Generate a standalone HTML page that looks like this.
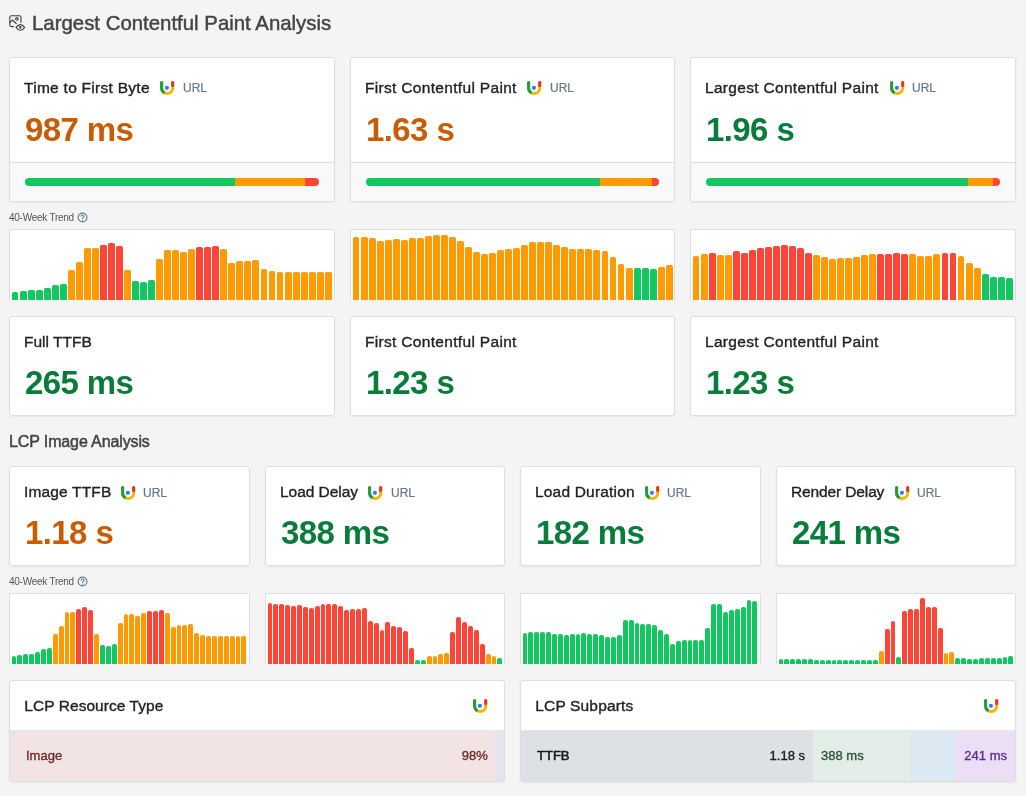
<!DOCTYPE html><html><head><meta charset="utf-8"><style>
*{box-sizing:border-box;margin:0;padding:0}
html,body{width:1026px;height:796px;overflow:hidden;background:#f4f4f4;font-family:"Liberation Sans",sans-serif}
body>div,body>svg{will-change:transform}
.h1{position:absolute;left:32px;top:10.5px;font-size:20.4px;color:#444;line-height:24px;white-space:nowrap;-webkit-text-stroke:0.45px currentColor}
.h2{position:absolute;left:8.5px;top:432px;font-size:16px;color:#444;line-height:20px;white-space:nowrap;letter-spacing:-0.12px;-webkit-text-stroke:0.5px currentColor}
.card{position:absolute;background:#fff;border:1px solid #dedede;border-radius:3px;overflow:hidden;box-shadow:0 1px 2px rgba(0,0,0,0.05)}
.mtitle{position:absolute;font-size:15.5px;line-height:20px;color:#222;white-space:nowrap;-webkit-text-stroke:0.35px #222}
.lg{position:absolute;width:15px;height:15px}
.lg svg{display:block}
.url{position:absolute;font-size:12px;line-height:15px;color:#687788;-webkit-text-stroke:0.2px #687788;white-space:nowrap}
.mval{position:absolute;font-size:33px;letter-spacing:-0.6px;font-weight:bold;line-height:36px;white-space:nowrap}
.foot{position:absolute;background:#f9f9f9;border-top:1px solid #dcdcdc;border-radius:0 0 3px 3px}
.dist{position:absolute;left:15px;right:15px;top:15px;height:8px;border-radius:4px;overflow:hidden;display:flex}
.trend{position:absolute;left:8.5px;font-size:10px;letter-spacing:-0.25px;color:#555;line-height:12px;white-space:nowrap}
.help{position:relative;display:inline-block;width:11px;height:11px;margin-left:2.8px;top:2.7px}
.help svg{left:0;top:-1px}
.chart{position:absolute;background:#fff;border:1px solid #dedede;border-bottom:none;border-radius:0 2px 0 0;overflow:hidden}
.chart svg{left:-1px!important;top:-1px!important}
.bt{position:absolute;left:14.3px;top:14.5px;font-size:15.5px;line-height:20px;color:#222;-webkit-text-stroke:0.35px #222;white-space:nowrap}
.lg2{position:absolute;right:16px;top:16.5px;width:15px;height:15px}
.lg2 svg{display:block}
.bbody{position:absolute;left:0;right:0;top:49px;bottom:0;font-size:13px;line-height:50px;border-top:1px solid #e4e6e6}
.bbody span{-webkit-text-stroke:0.35px currentColor}
.rt-l{position:absolute;left:16px;color:#6e2a2a}
.rt-r{position:absolute;right:16.3px;color:#6e2a2a}
.seg{position:absolute;top:0;bottom:0}
</style></head><body><svg width="20" height="20" viewBox="0 0 20 20" style="position:absolute;left:8px;top:14px" fill="none" stroke="#444" stroke-width="1.15" stroke-linecap="round" stroke-linejoin="round">
<path d="M5.5 12.55 H3.3 a1.5 1.5 0 0 1 -1.5 -1.5 V3.25 A1.5 1.5 0 0 1 3.3 1.75 H11.45 a1.5 1.5 0 0 1 1.5 1.5 V8.2"/>
<path d="M1.8 8.6 L4.4 6.05 L8.2 9.5"/>
<circle cx="8.9" cy="4.95" r="1.25"/>
<path d="M8.1 13.4 C9.7 10.8 10.8 10.55 12.35 10.55 C13.9 10.55 15 10.8 16.6 13.4 C15 16 13.9 16.25 12.35 16.25 C10.8 16.25 9.7 16 8.1 13.4Z"/>
<circle cx="12.3" cy="13.35" r="0.75" fill="#444"/>
</svg><div class="h1">Largest Contentful Paint Analysis</div><div class="card" style="left:9px;top:57px;width:326px;height:145px"></div><div class="mtitle" style="left:24.3px;top:78px;letter-spacing:0.276px">Time to First Byte</div><div class="lg" style="left:160px;top:79.5px"><svg class="logo" width="15" height="15" viewBox="0 0 15 15"><path d="M12.7 2.5 V7.9 A5.55 5.55 0 0 1 1.6 7.9 V2.5" fill="none" stroke="#fbb400" stroke-width="3" stroke-linecap="round"/><path d="M1.6 2.5 V7.9 A5.55 5.55 0 0 0 4.55 12.8" fill="none" stroke="#1f9d45" stroke-width="3"/><path d="M1.6 2.5 V4" fill="none" stroke="#1f9d45" stroke-width="3" stroke-linecap="round"/><path d="M12.7 2.5 V5.4" fill="none" stroke="#e5322b" stroke-width="3" stroke-linecap="round"/><circle cx="6.9" cy="7.8" r="2.1" fill="#3b7be8"/></svg></div><div class="url" style="left:182.7px;top:81px">URL</div><div class="mval" style="left:25px;top:112px;color:#c75d00">987 ms</div><div class="foot" style="left:10px;top:162px;width:324px;height:39px"><div class="dist"><div style="width:71.4%;background:#12c660"></div><div style="width:23.8%;background:#ff9a00"></div><div style="flex:1;background:#ff4538"></div></div></div><div class="card" style="left:350px;top:57px;width:325px;height:145px"></div><div class="mtitle" style="left:365.3px;top:78px;letter-spacing:0.319px">First Contentful Paint</div><div class="lg" style="left:526.5px;top:79.5px"><svg class="logo" width="15" height="15" viewBox="0 0 15 15"><path d="M12.7 2.5 V7.9 A5.55 5.55 0 0 1 1.6 7.9 V2.5" fill="none" stroke="#fbb400" stroke-width="3" stroke-linecap="round"/><path d="M1.6 2.5 V7.9 A5.55 5.55 0 0 0 4.55 12.8" fill="none" stroke="#1f9d45" stroke-width="3"/><path d="M1.6 2.5 V4" fill="none" stroke="#1f9d45" stroke-width="3" stroke-linecap="round"/><path d="M12.7 2.5 V5.4" fill="none" stroke="#e5322b" stroke-width="3" stroke-linecap="round"/><circle cx="6.9" cy="7.8" r="2.1" fill="#3b7be8"/></svg></div><div class="url" style="left:549.6px;top:81px">URL</div><div class="mval" style="left:366px;top:112px;color:#c75d00">1.63 s</div><div class="foot" style="left:351px;top:162px;width:323px;height:39px"><div class="dist"><div style="width:79.9%;background:#12c660"></div><div style="width:17.7%;background:#ff9a00"></div><div style="flex:1;background:#ff4538"></div></div></div><div class="card" style="left:690px;top:57px;width:326px;height:145px"></div><div class="mtitle" style="left:705.3px;top:78px;letter-spacing:0.309px">Largest Contentful Paint</div><div class="lg" style="left:889.5px;top:79.5px"><svg class="logo" width="15" height="15" viewBox="0 0 15 15"><path d="M12.7 2.5 V7.9 A5.55 5.55 0 0 1 1.6 7.9 V2.5" fill="none" stroke="#fbb400" stroke-width="3" stroke-linecap="round"/><path d="M1.6 2.5 V7.9 A5.55 5.55 0 0 0 4.55 12.8" fill="none" stroke="#1f9d45" stroke-width="3"/><path d="M1.6 2.5 V4" fill="none" stroke="#1f9d45" stroke-width="3" stroke-linecap="round"/><path d="M12.7 2.5 V5.4" fill="none" stroke="#e5322b" stroke-width="3" stroke-linecap="round"/><circle cx="6.9" cy="7.8" r="2.1" fill="#3b7be8"/></svg></div><div class="url" style="left:911.9px;top:81px">URL</div><div class="mval" style="left:706px;top:112px;color:#097b3b">1.96 s</div><div class="foot" style="left:691px;top:162px;width:324px;height:39px"><div class="dist"><div style="width:89.1%;background:#12c660"></div><div style="width:8.4%;background:#ff9a00"></div><div style="flex:1;background:#ff4538"></div></div></div><div class="trend" style="top:209.5px">40-Week Trend<span class="help"><svg width="11" height="11" viewBox="0 0 11 11" style="position:absolute"><circle cx="5.5" cy="5.5" r="4.4" fill="none" stroke="#6a7d90" stroke-width="1.2"/><path d="M4.1 4.4 A1.45 1.45 0 1 1 5.9 5.8 C5.5 6 5.5 6.3 5.5 6.8" fill="none" stroke="#6a7d90" stroke-width="1.1"/><circle cx="5.5" cy="8.2" r="0.6" fill="#6f8090"/></svg></span></div><div class="chart" style="left:9px;top:229px;width:326px;height:71px"><svg width="326" height="71" style="position:absolute;left:0;top:0"><path d="M3 72V64.80A1.8 1.8 0 0 1 4.80 63H7.20A1.8 1.8 0 0 1 9 64.80V72Z" fill="#12c660"/><path d="M11 72V63.80A1.8 1.8 0 0 1 12.80 62H16.20A1.8 1.8 0 0 1 18 63.80V72Z" fill="#12c660"/><path d="M19 72V62.80A1.8 1.8 0 0 1 20.80 61H24.20A1.8 1.8 0 0 1 26 62.80V72Z" fill="#12c660"/><path d="M27 72V62.80A1.8 1.8 0 0 1 28.80 61H32.20A1.8 1.8 0 0 1 34 62.80V72Z" fill="#12c660"/><path d="M35 72V60.80A1.8 1.8 0 0 1 36.80 59H40.20A1.8 1.8 0 0 1 42 60.80V72Z" fill="#12c660"/><path d="M43 72V57.80A1.8 1.8 0 0 1 44.80 56H48.20A1.8 1.8 0 0 1 50 57.80V72Z" fill="#12c660"/><path d="M51 72V56.80A1.8 1.8 0 0 1 52.80 55H56.20A1.8 1.8 0 0 1 58 56.80V72Z" fill="#12c660"/><path d="M59 72V42.80A1.8 1.8 0 0 1 60.80 41H64.20A1.8 1.8 0 0 1 66 42.80V72Z" fill="#ff9a00"/><path d="M67 72V34.80A1.8 1.8 0 0 1 68.80 33H72.20A1.8 1.8 0 0 1 74 34.80V72Z" fill="#ff9a00"/><path d="M75 72V20.80A1.8 1.8 0 0 1 76.80 19H80.20A1.8 1.8 0 0 1 82 20.80V72Z" fill="#ff9a00"/><path d="M83 72V20.80A1.8 1.8 0 0 1 84.80 19H88.20A1.8 1.8 0 0 1 90 20.80V72Z" fill="#ff9a00"/><path d="M91 72V17.80A1.8 1.8 0 0 1 92.80 16H96.20A1.8 1.8 0 0 1 98 17.80V72Z" fill="#ff4538"/><path d="M99 72V15.80A1.8 1.8 0 0 1 100.80 14H104.20A1.8 1.8 0 0 1 106 15.80V72Z" fill="#ff4538"/><path d="M107 72V18.80A1.8 1.8 0 0 1 108.80 17H112.20A1.8 1.8 0 0 1 114 18.80V72Z" fill="#ff4538"/><path d="M115 72V42.80A1.8 1.8 0 0 1 116.80 41H120.20A1.8 1.8 0 0 1 122 42.80V72Z" fill="#ff9a00"/><path d="M123 72V53.80A1.8 1.8 0 0 1 124.80 52H128.20A1.8 1.8 0 0 1 130 53.80V72Z" fill="#12c660"/><path d="M131 72V54.80A1.8 1.8 0 0 1 132.80 53H136.20A1.8 1.8 0 0 1 138 54.80V72Z" fill="#12c660"/><path d="M139 72V52.80A1.8 1.8 0 0 1 140.80 51H144.20A1.8 1.8 0 0 1 146 52.80V72Z" fill="#12c660"/><path d="M147 72V31.80A1.8 1.8 0 0 1 148.80 30H152.20A1.8 1.8 0 0 1 154 31.80V72Z" fill="#ff9a00"/><path d="M155 72V22.80A1.8 1.8 0 0 1 156.80 21H160.20A1.8 1.8 0 0 1 162 22.80V72Z" fill="#ff9a00"/><path d="M163 72V22.80A1.8 1.8 0 0 1 164.80 21H168.20A1.8 1.8 0 0 1 170 22.80V72Z" fill="#ff9a00"/><path d="M171 72V24.80A1.8 1.8 0 0 1 172.80 23H176.20A1.8 1.8 0 0 1 178 24.80V72Z" fill="#ff9a00"/><path d="M179 72V21.80A1.8 1.8 0 0 1 180.80 20H184.20A1.8 1.8 0 0 1 186 21.80V72Z" fill="#ff9a00"/><path d="M187 72V19.80A1.8 1.8 0 0 1 188.80 18H192.20A1.8 1.8 0 0 1 194 19.80V72Z" fill="#ff4538"/><path d="M195 72V19.80A1.8 1.8 0 0 1 196.80 18H200.20A1.8 1.8 0 0 1 202 19.80V72Z" fill="#ff4538"/><path d="M203 72V18.80A1.8 1.8 0 0 1 204.80 17H208.20A1.8 1.8 0 0 1 210 18.80V72Z" fill="#ff4538"/><path d="M211 72V21.80A1.8 1.8 0 0 1 212.80 20H216.20A1.8 1.8 0 0 1 218 21.80V72Z" fill="#ff9a00"/><path d="M219 72V35.80A1.8 1.8 0 0 1 220.80 34H224.20A1.8 1.8 0 0 1 226 35.80V72Z" fill="#ff9a00"/><path d="M227 72V33.80A1.8 1.8 0 0 1 228.80 32H232.20A1.8 1.8 0 0 1 234 33.80V72Z" fill="#ff9a00"/><path d="M235 72V33.80A1.8 1.8 0 0 1 236.80 32H240.20A1.8 1.8 0 0 1 242 33.80V72Z" fill="#ff9a00"/><path d="M243 72V32.80A1.8 1.8 0 0 1 244.80 31H248.20A1.8 1.8 0 0 1 250 32.80V72Z" fill="#ff9a00"/><path d="M252 72V41.80A1.8 1.8 0 0 1 253.80 40H256.20A1.8 1.8 0 0 1 258 41.80V72Z" fill="#ff9a00"/><path d="M260 72V43.80A1.8 1.8 0 0 1 261.80 42H264.20A1.8 1.8 0 0 1 266 43.80V72Z" fill="#ff9a00"/><path d="M268 72V44.80A1.8 1.8 0 0 1 269.80 43H272.20A1.8 1.8 0 0 1 274 44.80V72Z" fill="#ff9a00"/><path d="M276 72V44.80A1.8 1.8 0 0 1 277.80 43H281.20A1.8 1.8 0 0 1 283 44.80V72Z" fill="#ff9a00"/><path d="M284 72V44.80A1.8 1.8 0 0 1 285.80 43H289.20A1.8 1.8 0 0 1 291 44.80V72Z" fill="#ff9a00"/><path d="M292 72V44.80A1.8 1.8 0 0 1 293.80 43H297.20A1.8 1.8 0 0 1 299 44.80V72Z" fill="#ff9a00"/><path d="M300 72V44.80A1.8 1.8 0 0 1 301.80 43H305.20A1.8 1.8 0 0 1 307 44.80V72Z" fill="#ff9a00"/><path d="M308 72V44.80A1.8 1.8 0 0 1 309.80 43H313.20A1.8 1.8 0 0 1 315 44.80V72Z" fill="#ff9a00"/><path d="M316 72V44.80A1.8 1.8 0 0 1 317.80 43H321.20A1.8 1.8 0 0 1 323 44.80V72Z" fill="#ff9a00"/></svg></div><div class="chart" style="left:350px;top:229px;width:325px;height:71px"><svg width="325" height="71" style="position:absolute;left:0;top:0"><path d="M3 72V9.80A1.8 1.8 0 0 1 4.80 8H7.20A1.8 1.8 0 0 1 9 9.80V72Z" fill="#ff9a00"/><path d="M11 72V9.80A1.8 1.8 0 0 1 12.80 8H16.20A1.8 1.8 0 0 1 18 9.80V72Z" fill="#ff9a00"/><path d="M19 72V10.80A1.8 1.8 0 0 1 20.80 9H24.20A1.8 1.8 0 0 1 26 10.80V72Z" fill="#ff9a00"/><path d="M27 72V13.80A1.8 1.8 0 0 1 28.80 12H32.20A1.8 1.8 0 0 1 34 13.80V72Z" fill="#ff9a00"/><path d="M35 72V12.80A1.8 1.8 0 0 1 36.80 11H40.20A1.8 1.8 0 0 1 42 12.80V72Z" fill="#ff9a00"/><path d="M43 72V11.80A1.8 1.8 0 0 1 44.80 10H48.20A1.8 1.8 0 0 1 50 11.80V72Z" fill="#ff9a00"/><path d="M51 72V12.80A1.8 1.8 0 0 1 52.80 11H56.20A1.8 1.8 0 0 1 58 12.80V72Z" fill="#ff9a00"/><path d="M59 72V10.80A1.8 1.8 0 0 1 60.80 9H64.20A1.8 1.8 0 0 1 66 10.80V72Z" fill="#ff9a00"/><path d="M67 72V10.80A1.8 1.8 0 0 1 68.80 9H72.20A1.8 1.8 0 0 1 74 10.80V72Z" fill="#ff9a00"/><path d="M75 72V8.80A1.8 1.8 0 0 1 76.80 7H80.20A1.8 1.8 0 0 1 82 8.80V72Z" fill="#ff9a00"/><path d="M83 72V7.80A1.8 1.8 0 0 1 84.80 6H88.20A1.8 1.8 0 0 1 90 7.80V72Z" fill="#ff9a00"/><path d="M91 72V7.80A1.8 1.8 0 0 1 92.80 6H96.20A1.8 1.8 0 0 1 98 7.80V72Z" fill="#ff9a00"/><path d="M99 72V9.80A1.8 1.8 0 0 1 100.80 8H104.20A1.8 1.8 0 0 1 106 9.80V72Z" fill="#ff9a00"/><path d="M107 72V13.80A1.8 1.8 0 0 1 108.80 12H112.20A1.8 1.8 0 0 1 114 13.80V72Z" fill="#ff9a00"/><path d="M115 72V19.80A1.8 1.8 0 0 1 116.80 18H120.20A1.8 1.8 0 0 1 122 19.80V72Z" fill="#ff9a00"/><path d="M123 72V24.80A1.8 1.8 0 0 1 124.80 23H128.20A1.8 1.8 0 0 1 130 24.80V72Z" fill="#ff9a00"/><path d="M131 72V26.80A1.8 1.8 0 0 1 132.80 25H136.20A1.8 1.8 0 0 1 138 26.80V72Z" fill="#ff9a00"/><path d="M139 72V25.80A1.8 1.8 0 0 1 140.80 24H144.20A1.8 1.8 0 0 1 146 25.80V72Z" fill="#ff9a00"/><path d="M147 72V22.80A1.8 1.8 0 0 1 148.80 21H152.20A1.8 1.8 0 0 1 154 22.80V72Z" fill="#ff9a00"/><path d="M155 72V21.80A1.8 1.8 0 0 1 156.80 20H160.20A1.8 1.8 0 0 1 162 21.80V72Z" fill="#ff9a00"/><path d="M163 72V20.80A1.8 1.8 0 0 1 164.80 19H168.20A1.8 1.8 0 0 1 170 20.80V72Z" fill="#ff9a00"/><path d="M171 72V17.80A1.8 1.8 0 0 1 172.80 16H176.20A1.8 1.8 0 0 1 178 17.80V72Z" fill="#ff9a00"/><path d="M179 72V14.80A1.8 1.8 0 0 1 180.80 13H184.20A1.8 1.8 0 0 1 186 14.80V72Z" fill="#ff9a00"/><path d="M187 72V14.80A1.8 1.8 0 0 1 188.80 13H192.20A1.8 1.8 0 0 1 194 14.80V72Z" fill="#ff9a00"/><path d="M195 72V14.80A1.8 1.8 0 0 1 196.80 13H200.20A1.8 1.8 0 0 1 202 14.80V72Z" fill="#ff9a00"/><path d="M203 72V17.80A1.8 1.8 0 0 1 204.80 16H208.20A1.8 1.8 0 0 1 210 17.80V72Z" fill="#ff9a00"/><path d="M211 72V19.80A1.8 1.8 0 0 1 212.80 18H216.20A1.8 1.8 0 0 1 218 19.80V72Z" fill="#ff9a00"/><path d="M219 72V21.80A1.8 1.8 0 0 1 220.80 20H224.20A1.8 1.8 0 0 1 226 21.80V72Z" fill="#ff9a00"/><path d="M227 72V21.80A1.8 1.8 0 0 1 228.80 20H232.20A1.8 1.8 0 0 1 234 21.80V72Z" fill="#ff9a00"/><path d="M235 72V21.80A1.8 1.8 0 0 1 236.80 20H240.20A1.8 1.8 0 0 1 242 21.80V72Z" fill="#ff9a00"/><path d="M243 72V22.80A1.8 1.8 0 0 1 244.80 21H248.20A1.8 1.8 0 0 1 250 22.80V72Z" fill="#ff9a00"/><path d="M252 72V23.80A1.8 1.8 0 0 1 253.80 22H256.20A1.8 1.8 0 0 1 258 23.80V72Z" fill="#ff9a00"/><path d="M260 72V29.80A1.8 1.8 0 0 1 261.80 28H264.20A1.8 1.8 0 0 1 266 29.80V72Z" fill="#ff9a00"/><path d="M268 72V36.80A1.8 1.8 0 0 1 269.80 35H272.20A1.8 1.8 0 0 1 274 36.80V72Z" fill="#ff9a00"/><path d="M276 72V40.80A1.8 1.8 0 0 1 277.80 39H281.20A1.8 1.8 0 0 1 283 40.80V72Z" fill="#ff9a00"/><path d="M284 72V40.80A1.8 1.8 0 0 1 285.80 39H289.20A1.8 1.8 0 0 1 291 40.80V72Z" fill="#12c660"/><path d="M292 72V40.80A1.8 1.8 0 0 1 293.80 39H297.20A1.8 1.8 0 0 1 299 40.80V72Z" fill="#12c660"/><path d="M300 72V41.80A1.8 1.8 0 0 1 301.80 40H305.20A1.8 1.8 0 0 1 307 41.80V72Z" fill="#12c660"/><path d="M308 72V39.80A1.8 1.8 0 0 1 309.80 38H313.20A1.8 1.8 0 0 1 315 39.80V72Z" fill="#ff9a00"/><path d="M316 72V37.80A1.8 1.8 0 0 1 317.80 36H321.20A1.8 1.8 0 0 1 323 37.80V72Z" fill="#ff9a00"/></svg></div><div class="chart" style="left:690px;top:229px;width:326px;height:71px"><svg width="326" height="71" style="position:absolute;left:0;top:0"><path d="M3 72V28.80A1.8 1.8 0 0 1 4.80 27H7.20A1.8 1.8 0 0 1 9 28.80V72Z" fill="#ff9a00"/><path d="M11 72V26.80A1.8 1.8 0 0 1 12.80 25H16.20A1.8 1.8 0 0 1 18 26.80V72Z" fill="#ff9a00"/><path d="M19 72V25.80A1.8 1.8 0 0 1 20.80 24H24.20A1.8 1.8 0 0 1 26 25.80V72Z" fill="#ff4538"/><path d="M27 72V27.80A1.8 1.8 0 0 1 28.80 26H32.20A1.8 1.8 0 0 1 34 27.80V72Z" fill="#ff9a00"/><path d="M35 72V27.80A1.8 1.8 0 0 1 36.80 26H40.20A1.8 1.8 0 0 1 42 27.80V72Z" fill="#ff9a00"/><path d="M43 72V23.80A1.8 1.8 0 0 1 44.80 22H48.20A1.8 1.8 0 0 1 50 23.80V72Z" fill="#ff4538"/><path d="M51 72V25.80A1.8 1.8 0 0 1 52.80 24H56.20A1.8 1.8 0 0 1 58 25.80V72Z" fill="#ff4538"/><path d="M59 72V22.80A1.8 1.8 0 0 1 60.80 21H64.20A1.8 1.8 0 0 1 66 22.80V72Z" fill="#ff4538"/><path d="M67 72V20.80A1.8 1.8 0 0 1 68.80 19H72.20A1.8 1.8 0 0 1 74 20.80V72Z" fill="#ff4538"/><path d="M75 72V19.80A1.8 1.8 0 0 1 76.80 18H80.20A1.8 1.8 0 0 1 82 19.80V72Z" fill="#ff4538"/><path d="M83 72V18.80A1.8 1.8 0 0 1 84.80 17H88.20A1.8 1.8 0 0 1 90 18.80V72Z" fill="#ff4538"/><path d="M91 72V17.80A1.8 1.8 0 0 1 92.80 16H96.20A1.8 1.8 0 0 1 98 17.80V72Z" fill="#ff4538"/><path d="M99 72V18.80A1.8 1.8 0 0 1 100.80 17H104.20A1.8 1.8 0 0 1 106 18.80V72Z" fill="#ff4538"/><path d="M107 72V20.80A1.8 1.8 0 0 1 108.80 19H112.20A1.8 1.8 0 0 1 114 20.80V72Z" fill="#ff4538"/><path d="M115 72V25.80A1.8 1.8 0 0 1 116.80 24H120.20A1.8 1.8 0 0 1 122 25.80V72Z" fill="#ff4538"/><path d="M123 72V27.80A1.8 1.8 0 0 1 124.80 26H128.20A1.8 1.8 0 0 1 130 27.80V72Z" fill="#ff9a00"/><path d="M131 72V29.80A1.8 1.8 0 0 1 132.80 28H136.20A1.8 1.8 0 0 1 138 29.80V72Z" fill="#ff9a00"/><path d="M139 72V31.80A1.8 1.8 0 0 1 140.80 30H144.20A1.8 1.8 0 0 1 146 31.80V72Z" fill="#ff9a00"/><path d="M147 72V30.80A1.8 1.8 0 0 1 148.80 29H152.20A1.8 1.8 0 0 1 154 30.80V72Z" fill="#ff9a00"/><path d="M155 72V30.80A1.8 1.8 0 0 1 156.80 29H160.20A1.8 1.8 0 0 1 162 30.80V72Z" fill="#ff9a00"/><path d="M163 72V29.80A1.8 1.8 0 0 1 164.80 28H168.20A1.8 1.8 0 0 1 170 29.80V72Z" fill="#ff9a00"/><path d="M171 72V27.80A1.8 1.8 0 0 1 172.80 26H176.20A1.8 1.8 0 0 1 178 27.80V72Z" fill="#ff9a00"/><path d="M179 72V26.80A1.8 1.8 0 0 1 180.80 25H184.20A1.8 1.8 0 0 1 186 26.80V72Z" fill="#ff9a00"/><path d="M187 72V26.80A1.8 1.8 0 0 1 188.80 25H192.20A1.8 1.8 0 0 1 194 26.80V72Z" fill="#ff4538"/><path d="M195 72V26.80A1.8 1.8 0 0 1 196.80 25H200.20A1.8 1.8 0 0 1 202 26.80V72Z" fill="#ff4538"/><path d="M203 72V25.80A1.8 1.8 0 0 1 204.80 24H208.20A1.8 1.8 0 0 1 210 25.80V72Z" fill="#ff4538"/><path d="M211 72V26.80A1.8 1.8 0 0 1 212.80 25H216.20A1.8 1.8 0 0 1 218 26.80V72Z" fill="#ff4538"/><path d="M219 72V26.80A1.8 1.8 0 0 1 220.80 25H224.20A1.8 1.8 0 0 1 226 26.80V72Z" fill="#ff9a00"/><path d="M227 72V28.80A1.8 1.8 0 0 1 228.80 27H232.20A1.8 1.8 0 0 1 234 28.80V72Z" fill="#ff9a00"/><path d="M235 72V28.80A1.8 1.8 0 0 1 236.80 27H240.20A1.8 1.8 0 0 1 242 28.80V72Z" fill="#ff9a00"/><path d="M243 72V26.80A1.8 1.8 0 0 1 244.80 25H248.20A1.8 1.8 0 0 1 250 26.80V72Z" fill="#ff9a00"/><path d="M252 72V25.80A1.8 1.8 0 0 1 253.80 24H256.20A1.8 1.8 0 0 1 258 25.80V72Z" fill="#ff4538"/><path d="M260 72V25.80A1.8 1.8 0 0 1 261.80 24H264.20A1.8 1.8 0 0 1 266 25.80V72Z" fill="#ff4538"/><path d="M268 72V28.80A1.8 1.8 0 0 1 269.80 27H272.20A1.8 1.8 0 0 1 274 28.80V72Z" fill="#ff9a00"/><path d="M276 72V35.80A1.8 1.8 0 0 1 277.80 34H281.20A1.8 1.8 0 0 1 283 35.80V72Z" fill="#ff9a00"/><path d="M284 72V40.80A1.8 1.8 0 0 1 285.80 39H289.20A1.8 1.8 0 0 1 291 40.80V72Z" fill="#ff9a00"/><path d="M292 72V46.80A1.8 1.8 0 0 1 293.80 45H297.20A1.8 1.8 0 0 1 299 46.80V72Z" fill="#12c660"/><path d="M300 72V49.80A1.8 1.8 0 0 1 301.80 48H305.20A1.8 1.8 0 0 1 307 49.80V72Z" fill="#12c660"/><path d="M308 72V49.80A1.8 1.8 0 0 1 309.80 48H313.20A1.8 1.8 0 0 1 315 49.80V72Z" fill="#12c660"/><path d="M316 72V50.80A1.8 1.8 0 0 1 317.80 49H321.20A1.8 1.8 0 0 1 323 50.80V72Z" fill="#12c660"/></svg></div><div class="card" style="left:9px;top:316px;width:326px;height:100px"></div><div class="mtitle" style="left:24.3px;top:332px;letter-spacing:0px">Full TTFB</div><div class="mval" style="left:25px;top:365px;color:#097b3b">265 ms</div><div class="card" style="left:350px;top:316px;width:325px;height:100px"></div><div class="mtitle" style="left:365.3px;top:332px;letter-spacing:0.319px">First Contentful Paint</div><div class="mval" style="left:366px;top:365px;color:#097b3b">1.23 s</div><div class="card" style="left:690px;top:316px;width:326px;height:100px"></div><div class="mtitle" style="left:705.3px;top:332px;letter-spacing:0.309px">Largest Contentful Paint</div><div class="mval" style="left:706px;top:365px;color:#097b3b">1.23 s</div><div class="h2">LCP Image Analysis</div><div class="card" style="left:9px;top:466px;width:241px;height:100px"></div><div class="mtitle" style="left:24.3px;top:482px;letter-spacing:0.156px">Image TTFB</div><div class="lg" style="left:120.9px;top:484.5px"><svg class="logo" width="15" height="15" viewBox="0 0 15 15"><path d="M12.7 2.5 V7.9 A5.55 5.55 0 0 1 1.6 7.9 V2.5" fill="none" stroke="#fbb400" stroke-width="3" stroke-linecap="round"/><path d="M1.6 2.5 V7.9 A5.55 5.55 0 0 0 4.55 12.8" fill="none" stroke="#1f9d45" stroke-width="3"/><path d="M1.6 2.5 V4" fill="none" stroke="#1f9d45" stroke-width="3" stroke-linecap="round"/><path d="M12.7 2.5 V5.4" fill="none" stroke="#e5322b" stroke-width="3" stroke-linecap="round"/><circle cx="6.9" cy="7.8" r="2.1" fill="#3b7be8"/></svg></div><div class="url" style="left:142.9px;top:486px">URL</div><div class="mval" style="left:25px;top:515px;color:#c75d00">1.18 s</div><div class="card" style="left:265px;top:466px;width:240px;height:100px"></div><div class="mtitle" style="left:280.3px;top:482px;letter-spacing:-0.033px">Load Delay</div><div class="lg" style="left:367.8px;top:484.5px"><svg class="logo" width="15" height="15" viewBox="0 0 15 15"><path d="M12.7 2.5 V7.9 A5.55 5.55 0 0 1 1.6 7.9 V2.5" fill="none" stroke="#fbb400" stroke-width="3" stroke-linecap="round"/><path d="M1.6 2.5 V7.9 A5.55 5.55 0 0 0 4.55 12.8" fill="none" stroke="#1f9d45" stroke-width="3"/><path d="M1.6 2.5 V4" fill="none" stroke="#1f9d45" stroke-width="3" stroke-linecap="round"/><path d="M12.7 2.5 V5.4" fill="none" stroke="#e5322b" stroke-width="3" stroke-linecap="round"/><circle cx="6.9" cy="7.8" r="2.1" fill="#3b7be8"/></svg></div><div class="url" style="left:390.6px;top:486px">URL</div><div class="mval" style="left:281px;top:515px;color:#097b3b">388 ms</div><div class="card" style="left:520px;top:466px;width:241px;height:100px"></div><div class="mtitle" style="left:535.3px;top:482px;letter-spacing:0.183px">Load Duration</div><div class="lg" style="left:644.8px;top:484.5px"><svg class="logo" width="15" height="15" viewBox="0 0 15 15"><path d="M12.7 2.5 V7.9 A5.55 5.55 0 0 1 1.6 7.9 V2.5" fill="none" stroke="#fbb400" stroke-width="3" stroke-linecap="round"/><path d="M1.6 2.5 V7.9 A5.55 5.55 0 0 0 4.55 12.8" fill="none" stroke="#1f9d45" stroke-width="3"/><path d="M1.6 2.5 V4" fill="none" stroke="#1f9d45" stroke-width="3" stroke-linecap="round"/><path d="M12.7 2.5 V5.4" fill="none" stroke="#e5322b" stroke-width="3" stroke-linecap="round"/><circle cx="6.9" cy="7.8" r="2.1" fill="#3b7be8"/></svg></div><div class="url" style="left:667.4px;top:486px">URL</div><div class="mval" style="left:536px;top:515px;color:#097b3b">182 ms</div><div class="card" style="left:776px;top:466px;width:240px;height:100px"></div><div class="mtitle" style="left:791.3px;top:482px;letter-spacing:-0.127px">Render Delay</div><div class="lg" style="left:894.6px;top:484.5px"><svg class="logo" width="15" height="15" viewBox="0 0 15 15"><path d="M12.7 2.5 V7.9 A5.55 5.55 0 0 1 1.6 7.9 V2.5" fill="none" stroke="#fbb400" stroke-width="3" stroke-linecap="round"/><path d="M1.6 2.5 V7.9 A5.55 5.55 0 0 0 4.55 12.8" fill="none" stroke="#1f9d45" stroke-width="3"/><path d="M1.6 2.5 V4" fill="none" stroke="#1f9d45" stroke-width="3" stroke-linecap="round"/><path d="M12.7 2.5 V5.4" fill="none" stroke="#e5322b" stroke-width="3" stroke-linecap="round"/><circle cx="6.9" cy="7.8" r="2.1" fill="#3b7be8"/></svg></div><div class="url" style="left:917px;top:486px">URL</div><div class="mval" style="left:792px;top:515px;color:#097b3b">241 ms</div><div class="trend" style="top:573.5px">40-Week Trend<span class="help"><svg width="11" height="11" viewBox="0 0 11 11" style="position:absolute"><circle cx="5.5" cy="5.5" r="4.4" fill="none" stroke="#6a7d90" stroke-width="1.2"/><path d="M4.1 4.4 A1.45 1.45 0 1 1 5.9 5.8 C5.5 6 5.5 6.3 5.5 6.8" fill="none" stroke="#6a7d90" stroke-width="1.1"/><circle cx="5.5" cy="8.2" r="0.6" fill="#6f8090"/></svg></span></div><div class="chart" style="left:9px;top:593px;width:241px;height:71px"><svg width="241" height="71" style="position:absolute;left:0;top:0"><path d="M3 72V65.00A2.0 2.0 0 0 1 5.00 63H5.00A2.0 2.0 0 0 1 7 65.00V72Z" fill="#12c660"/><path d="M8 72V64.00A2.0 2.0 0 0 1 10.00 62H11.00A2.0 2.0 0 0 1 13 64.00V72Z" fill="#12c660"/><path d="M14 72V63.00A2.0 2.0 0 0 1 16.00 61H17.00A2.0 2.0 0 0 1 19 63.00V72Z" fill="#12c660"/><path d="M20 72V63.00A2.0 2.0 0 0 1 22.00 61H23.00A2.0 2.0 0 0 1 25 63.00V72Z" fill="#12c660"/><path d="M26 72V61.00A2.0 2.0 0 0 1 28.00 59H29.00A2.0 2.0 0 0 1 31 61.00V72Z" fill="#12c660"/><path d="M32 72V58.00A2.0 2.0 0 0 1 34.00 56H35.00A2.0 2.0 0 0 1 37 58.00V72Z" fill="#12c660"/><path d="M38 72V57.00A2.0 2.0 0 0 1 40.00 55H41.00A2.0 2.0 0 0 1 43 57.00V72Z" fill="#12c660"/><path d="M44 72V43.00A2.0 2.0 0 0 1 46.00 41H47.00A2.0 2.0 0 0 1 49 43.00V72Z" fill="#ff9a00"/><path d="M50 72V35.00A2.0 2.0 0 0 1 52.00 33H53.00A2.0 2.0 0 0 1 55 35.00V72Z" fill="#ff9a00"/><path d="M56 72V21.00A2.0 2.0 0 0 1 58.00 19H58.00A2.0 2.0 0 0 1 60 21.00V72Z" fill="#ff9a00"/><path d="M61 72V21.00A2.0 2.0 0 0 1 63.00 19H64.00A2.0 2.0 0 0 1 66 21.00V72Z" fill="#ff9a00"/><path d="M67 72V18.00A2.0 2.0 0 0 1 69.00 16H70.00A2.0 2.0 0 0 1 72 18.00V72Z" fill="#ff4538"/><path d="M73 72V16.00A2.0 2.0 0 0 1 75.00 14H76.00A2.0 2.0 0 0 1 78 16.00V72Z" fill="#ff4538"/><path d="M79 72V19.00A2.0 2.0 0 0 1 81.00 17H82.00A2.0 2.0 0 0 1 84 19.00V72Z" fill="#ff4538"/><path d="M85 72V43.00A2.0 2.0 0 0 1 87.00 41H88.00A2.0 2.0 0 0 1 90 43.00V72Z" fill="#ff9a00"/><path d="M91 72V54.00A2.0 2.0 0 0 1 93.00 52H94.00A2.0 2.0 0 0 1 96 54.00V72Z" fill="#12c660"/><path d="M97 72V55.00A2.0 2.0 0 0 1 99.00 53H100.00A2.0 2.0 0 0 1 102 55.00V72Z" fill="#12c660"/><path d="M103 72V53.00A2.0 2.0 0 0 1 105.00 51H106.00A2.0 2.0 0 0 1 108 53.00V72Z" fill="#12c660"/><path d="M109 72V32.00A2.0 2.0 0 0 1 111.00 30H112.00A2.0 2.0 0 0 1 114 32.00V72Z" fill="#ff9a00"/><path d="M115 72V23.00A2.0 2.0 0 0 1 117.00 21H117.00A2.0 2.0 0 0 1 119 23.00V72Z" fill="#ff9a00"/><path d="M120 72V23.00A2.0 2.0 0 0 1 122.00 21H123.00A2.0 2.0 0 0 1 125 23.00V72Z" fill="#ff9a00"/><path d="M126 72V25.00A2.0 2.0 0 0 1 128.00 23H129.00A2.0 2.0 0 0 1 131 25.00V72Z" fill="#ff9a00"/><path d="M132 72V22.00A2.0 2.0 0 0 1 134.00 20H135.00A2.0 2.0 0 0 1 137 22.00V72Z" fill="#ff9a00"/><path d="M138 72V20.00A2.0 2.0 0 0 1 140.00 18H141.00A2.0 2.0 0 0 1 143 20.00V72Z" fill="#ff4538"/><path d="M144 72V20.00A2.0 2.0 0 0 1 146.00 18H147.00A2.0 2.0 0 0 1 149 20.00V72Z" fill="#ff4538"/><path d="M150 72V19.00A2.0 2.0 0 0 1 152.00 17H153.00A2.0 2.0 0 0 1 155 19.00V72Z" fill="#ff4538"/><path d="M156 72V22.00A2.0 2.0 0 0 1 158.00 20H159.00A2.0 2.0 0 0 1 161 22.00V72Z" fill="#ff9a00"/><path d="M162 72V36.00A2.0 2.0 0 0 1 164.00 34H165.00A2.0 2.0 0 0 1 167 36.00V72Z" fill="#ff9a00"/><path d="M168 72V34.00A2.0 2.0 0 0 1 170.00 32H170.00A2.0 2.0 0 0 1 172 34.00V72Z" fill="#ff9a00"/><path d="M173 72V34.00A2.0 2.0 0 0 1 175.00 32H176.00A2.0 2.0 0 0 1 178 34.00V72Z" fill="#ff9a00"/><path d="M179 72V33.00A2.0 2.0 0 0 1 181.00 31H182.00A2.0 2.0 0 0 1 184 33.00V72Z" fill="#ff9a00"/><path d="M185 72V42.00A2.0 2.0 0 0 1 187.00 40H188.00A2.0 2.0 0 0 1 190 42.00V72Z" fill="#ff9a00"/><path d="M191 72V44.00A2.0 2.0 0 0 1 193.00 42H194.00A2.0 2.0 0 0 1 196 44.00V72Z" fill="#ff9a00"/><path d="M197 72V45.00A2.0 2.0 0 0 1 199.00 43H200.00A2.0 2.0 0 0 1 202 45.00V72Z" fill="#ff9a00"/><path d="M203 72V45.00A2.0 2.0 0 0 1 205.00 43H206.00A2.0 2.0 0 0 1 208 45.00V72Z" fill="#ff9a00"/><path d="M209 72V45.00A2.0 2.0 0 0 1 211.00 43H212.00A2.0 2.0 0 0 1 214 45.00V72Z" fill="#ff9a00"/><path d="M215 72V45.00A2.0 2.0 0 0 1 217.00 43H218.00A2.0 2.0 0 0 1 220 45.00V72Z" fill="#ff9a00"/><path d="M221 72V45.00A2.0 2.0 0 0 1 223.00 43H224.00A2.0 2.0 0 0 1 226 45.00V72Z" fill="#ff9a00"/><path d="M227 72V45.00A2.0 2.0 0 0 1 229.00 43H229.00A2.0 2.0 0 0 1 231 45.00V72Z" fill="#ff9a00"/><path d="M232 72V45.00A2.0 2.0 0 0 1 234.00 43H235.00A2.0 2.0 0 0 1 237 45.00V72Z" fill="#ff9a00"/></svg></div><div class="chart" style="left:265px;top:593px;width:240px;height:71px"><svg width="240" height="71" style="position:absolute;left:0;top:0"><path d="M3 72V12.00A2.0 2.0 0 0 1 5.00 10H5.00A2.0 2.0 0 0 1 7 12.00V72Z" fill="#ff4538"/><path d="M8 72V13.00A2.0 2.0 0 0 1 10.00 11H11.00A2.0 2.0 0 0 1 13 13.00V72Z" fill="#ff4538"/><path d="M14 72V13.00A2.0 2.0 0 0 1 16.00 11H17.00A2.0 2.0 0 0 1 19 13.00V72Z" fill="#ff4538"/><path d="M20 72V14.00A2.0 2.0 0 0 1 22.00 12H23.00A2.0 2.0 0 0 1 25 14.00V72Z" fill="#ff4538"/><path d="M26 72V15.00A2.0 2.0 0 0 1 28.00 13H29.00A2.0 2.0 0 0 1 31 15.00V72Z" fill="#ff4538"/><path d="M32 72V14.00A2.0 2.0 0 0 1 34.00 12H35.00A2.0 2.0 0 0 1 37 14.00V72Z" fill="#ff4538"/><path d="M38 72V16.00A2.0 2.0 0 0 1 40.00 14H41.00A2.0 2.0 0 0 1 43 16.00V72Z" fill="#ff4538"/><path d="M44 72V17.00A2.0 2.0 0 0 1 46.00 15H47.00A2.0 2.0 0 0 1 49 17.00V72Z" fill="#ff4538"/><path d="M50 72V15.00A2.0 2.0 0 0 1 52.00 13H53.00A2.0 2.0 0 0 1 55 15.00V72Z" fill="#ff4538"/><path d="M56 72V13.00A2.0 2.0 0 0 1 58.00 11H58.00A2.0 2.0 0 0 1 60 13.00V72Z" fill="#ff4538"/><path d="M61 72V13.00A2.0 2.0 0 0 1 63.00 11H64.00A2.0 2.0 0 0 1 66 13.00V72Z" fill="#ff4538"/><path d="M67 72V13.00A2.0 2.0 0 0 1 69.00 11H70.00A2.0 2.0 0 0 1 72 13.00V72Z" fill="#ff4538"/><path d="M73 72V15.00A2.0 2.0 0 0 1 75.00 13H76.00A2.0 2.0 0 0 1 78 15.00V72Z" fill="#ff4538"/><path d="M79 72V19.00A2.0 2.0 0 0 1 81.00 17H82.00A2.0 2.0 0 0 1 84 19.00V72Z" fill="#ff4538"/><path d="M85 72V18.00A2.0 2.0 0 0 1 87.00 16H88.00A2.0 2.0 0 0 1 90 18.00V72Z" fill="#ff4538"/><path d="M91 72V18.00A2.0 2.0 0 0 1 93.00 16H94.00A2.0 2.0 0 0 1 96 18.00V72Z" fill="#ff4538"/><path d="M97 72V17.00A2.0 2.0 0 0 1 99.00 15H100.00A2.0 2.0 0 0 1 102 17.00V72Z" fill="#ff4538"/><path d="M103 72V30.00A2.0 2.0 0 0 1 105.00 28H106.00A2.0 2.0 0 0 1 108 30.00V72Z" fill="#ff4538"/><path d="M109 72V32.00A2.0 2.0 0 0 1 111.00 30H112.00A2.0 2.0 0 0 1 114 32.00V72Z" fill="#ff4538"/><path d="M115 72V39.00A2.0 2.0 0 0 1 117.00 37H117.00A2.0 2.0 0 0 1 119 39.00V72Z" fill="#ff4538"/><path d="M120 72V31.00A2.0 2.0 0 0 1 122.00 29H123.00A2.0 2.0 0 0 1 125 31.00V72Z" fill="#ff4538"/><path d="M126 72V35.00A2.0 2.0 0 0 1 128.00 33H129.00A2.0 2.0 0 0 1 131 35.00V72Z" fill="#ff4538"/><path d="M132 72V36.00A2.0 2.0 0 0 1 134.00 34H135.00A2.0 2.0 0 0 1 137 36.00V72Z" fill="#ff4538"/><path d="M138 72V40.00A2.0 2.0 0 0 1 140.00 38H141.00A2.0 2.0 0 0 1 143 40.00V72Z" fill="#ff4538"/><path d="M144 72V57.00A2.0 2.0 0 0 1 146.00 55H147.00A2.0 2.0 0 0 1 149 57.00V72Z" fill="#ff4538"/><path d="M150 72V69.00A2.0 2.0 0 0 1 152.00 67H153.00A2.0 2.0 0 0 1 155 69.00V72Z" fill="#12c660"/><path d="M156 72V69.00A2.0 2.0 0 0 1 158.00 67H159.00A2.0 2.0 0 0 1 161 69.00V72Z" fill="#12c660"/><path d="M162 72V65.00A2.0 2.0 0 0 1 164.00 63H165.00A2.0 2.0 0 0 1 167 65.00V72Z" fill="#ff9a00"/><path d="M168 72V65.00A2.0 2.0 0 0 1 170.00 63H170.00A2.0 2.0 0 0 1 172 65.00V72Z" fill="#ff9a00"/><path d="M173 72V63.00A2.0 2.0 0 0 1 175.00 61H176.00A2.0 2.0 0 0 1 178 63.00V72Z" fill="#ff9a00"/><path d="M179 72V62.00A2.0 2.0 0 0 1 181.00 60H182.00A2.0 2.0 0 0 1 184 62.00V72Z" fill="#ff9a00"/><path d="M185 72V41.00A2.0 2.0 0 0 1 187.00 39H188.00A2.0 2.0 0 0 1 190 41.00V72Z" fill="#ff4538"/><path d="M191 72V26.00A2.0 2.0 0 0 1 193.00 24H194.00A2.0 2.0 0 0 1 196 26.00V72Z" fill="#ff4538"/><path d="M197 72V31.00A2.0 2.0 0 0 1 199.00 29H200.00A2.0 2.0 0 0 1 202 31.00V72Z" fill="#ff4538"/><path d="M203 72V35.00A2.0 2.0 0 0 1 205.00 33H206.00A2.0 2.0 0 0 1 208 35.00V72Z" fill="#ff4538"/><path d="M209 72V39.00A2.0 2.0 0 0 1 211.00 37H212.00A2.0 2.0 0 0 1 214 39.00V72Z" fill="#ff4538"/><path d="M215 72V53.00A2.0 2.0 0 0 1 217.00 51H218.00A2.0 2.0 0 0 1 220 53.00V72Z" fill="#ff4538"/><path d="M221 72V63.00A2.0 2.0 0 0 1 223.00 61H224.00A2.0 2.0 0 0 1 226 63.00V72Z" fill="#ff9a00"/><path d="M227 72V65.00A2.0 2.0 0 0 1 229.00 63H229.00A2.0 2.0 0 0 1 231 65.00V72Z" fill="#ff9a00"/><path d="M232 72V67.00A2.0 2.0 0 0 1 234.00 65H235.00A2.0 2.0 0 0 1 237 67.00V72Z" fill="#12c660"/></svg></div><div class="chart" style="left:520px;top:593px;width:241px;height:71px"><svg width="241" height="71" style="position:absolute;left:0;top:0"><path d="M3 72V42.00A2.0 2.0 0 0 1 5.00 40H5.00A2.0 2.0 0 0 1 7 42.00V72Z" fill="#12c660"/><path d="M8 72V41.00A2.0 2.0 0 0 1 10.00 39H11.00A2.0 2.0 0 0 1 13 41.00V72Z" fill="#12c660"/><path d="M14 72V41.00A2.0 2.0 0 0 1 16.00 39H17.00A2.0 2.0 0 0 1 19 41.00V72Z" fill="#12c660"/><path d="M20 72V41.00A2.0 2.0 0 0 1 22.00 39H23.00A2.0 2.0 0 0 1 25 41.00V72Z" fill="#12c660"/><path d="M26 72V41.00A2.0 2.0 0 0 1 28.00 39H29.00A2.0 2.0 0 0 1 31 41.00V72Z" fill="#12c660"/><path d="M32 72V43.00A2.0 2.0 0 0 1 34.00 41H35.00A2.0 2.0 0 0 1 37 43.00V72Z" fill="#12c660"/><path d="M38 72V43.00A2.0 2.0 0 0 1 40.00 41H41.00A2.0 2.0 0 0 1 43 43.00V72Z" fill="#12c660"/><path d="M44 72V44.00A2.0 2.0 0 0 1 46.00 42H47.00A2.0 2.0 0 0 1 49 44.00V72Z" fill="#12c660"/><path d="M50 72V43.00A2.0 2.0 0 0 1 52.00 41H53.00A2.0 2.0 0 0 1 55 43.00V72Z" fill="#12c660"/><path d="M56 72V43.00A2.0 2.0 0 0 1 58.00 41H58.00A2.0 2.0 0 0 1 60 43.00V72Z" fill="#12c660"/><path d="M61 72V42.00A2.0 2.0 0 0 1 63.00 40H64.00A2.0 2.0 0 0 1 66 42.00V72Z" fill="#12c660"/><path d="M67 72V43.00A2.0 2.0 0 0 1 69.00 41H70.00A2.0 2.0 0 0 1 72 43.00V72Z" fill="#12c660"/><path d="M73 72V43.00A2.0 2.0 0 0 1 75.00 41H76.00A2.0 2.0 0 0 1 78 43.00V72Z" fill="#12c660"/><path d="M79 72V44.00A2.0 2.0 0 0 1 81.00 42H82.00A2.0 2.0 0 0 1 84 44.00V72Z" fill="#12c660"/><path d="M85 72V46.00A2.0 2.0 0 0 1 87.00 44H88.00A2.0 2.0 0 0 1 90 46.00V72Z" fill="#12c660"/><path d="M91 72V46.00A2.0 2.0 0 0 1 93.00 44H94.00A2.0 2.0 0 0 1 96 46.00V72Z" fill="#12c660"/><path d="M97 72V44.00A2.0 2.0 0 0 1 99.00 42H100.00A2.0 2.0 0 0 1 102 44.00V72Z" fill="#12c660"/><path d="M103 72V29.00A2.0 2.0 0 0 1 105.00 27H106.00A2.0 2.0 0 0 1 108 29.00V72Z" fill="#12c660"/><path d="M109 72V29.00A2.0 2.0 0 0 1 111.00 27H112.00A2.0 2.0 0 0 1 114 29.00V72Z" fill="#12c660"/><path d="M115 72V32.00A2.0 2.0 0 0 1 117.00 30H117.00A2.0 2.0 0 0 1 119 32.00V72Z" fill="#12c660"/><path d="M120 72V33.00A2.0 2.0 0 0 1 122.00 31H123.00A2.0 2.0 0 0 1 125 33.00V72Z" fill="#12c660"/><path d="M126 72V33.00A2.0 2.0 0 0 1 128.00 31H129.00A2.0 2.0 0 0 1 131 33.00V72Z" fill="#12c660"/><path d="M132 72V34.00A2.0 2.0 0 0 1 134.00 32H135.00A2.0 2.0 0 0 1 137 34.00V72Z" fill="#12c660"/><path d="M138 72V39.00A2.0 2.0 0 0 1 140.00 37H141.00A2.0 2.0 0 0 1 143 39.00V72Z" fill="#12c660"/><path d="M144 72V43.00A2.0 2.0 0 0 1 146.00 41H147.00A2.0 2.0 0 0 1 149 43.00V72Z" fill="#12c660"/><path d="M150 72V53.00A2.0 2.0 0 0 1 152.00 51H153.00A2.0 2.0 0 0 1 155 53.00V72Z" fill="#12c660"/><path d="M156 72V50.00A2.0 2.0 0 0 1 158.00 48H159.00A2.0 2.0 0 0 1 161 50.00V72Z" fill="#12c660"/><path d="M162 72V49.00A2.0 2.0 0 0 1 164.00 47H165.00A2.0 2.0 0 0 1 167 49.00V72Z" fill="#12c660"/><path d="M168 72V49.00A2.0 2.0 0 0 1 170.00 47H170.00A2.0 2.0 0 0 1 172 49.00V72Z" fill="#12c660"/><path d="M173 72V49.00A2.0 2.0 0 0 1 175.00 47H176.00A2.0 2.0 0 0 1 178 49.00V72Z" fill="#12c660"/><path d="M179 72V49.00A2.0 2.0 0 0 1 181.00 47H182.00A2.0 2.0 0 0 1 184 49.00V72Z" fill="#12c660"/><path d="M185 72V37.00A2.0 2.0 0 0 1 187.00 35H188.00A2.0 2.0 0 0 1 190 37.00V72Z" fill="#12c660"/><path d="M191 72V13.00A2.0 2.0 0 0 1 193.00 11H194.00A2.0 2.0 0 0 1 196 13.00V72Z" fill="#12c660"/><path d="M197 72V13.00A2.0 2.0 0 0 1 199.00 11H200.00A2.0 2.0 0 0 1 202 13.00V72Z" fill="#12c660"/><path d="M203 72V21.00A2.0 2.0 0 0 1 205.00 19H206.00A2.0 2.0 0 0 1 208 21.00V72Z" fill="#12c660"/><path d="M209 72V19.00A2.0 2.0 0 0 1 211.00 17H212.00A2.0 2.0 0 0 1 214 19.00V72Z" fill="#12c660"/><path d="M215 72V18.00A2.0 2.0 0 0 1 217.00 16H218.00A2.0 2.0 0 0 1 220 18.00V72Z" fill="#12c660"/><path d="M221 72V16.00A2.0 2.0 0 0 1 223.00 14H224.00A2.0 2.0 0 0 1 226 16.00V72Z" fill="#12c660"/><path d="M227 72V9.00A2.0 2.0 0 0 1 229.00 7H229.00A2.0 2.0 0 0 1 231 9.00V72Z" fill="#12c660"/><path d="M232 72V10.00A2.0 2.0 0 0 1 234.00 8H235.00A2.0 2.0 0 0 1 237 10.00V72Z" fill="#12c660"/></svg></div><div class="chart" style="left:776px;top:593px;width:240px;height:71px"><svg width="240" height="71" style="position:absolute;left:0;top:0"><path d="M3 72V68.00A2.0 2.0 0 0 1 5.00 66H5.00A2.0 2.0 0 0 1 7 68.00V72Z" fill="#12c660"/><path d="M8 72V68.00A2.0 2.0 0 0 1 10.00 66H11.00A2.0 2.0 0 0 1 13 68.00V72Z" fill="#12c660"/><path d="M14 72V68.00A2.0 2.0 0 0 1 16.00 66H17.00A2.0 2.0 0 0 1 19 68.00V72Z" fill="#12c660"/><path d="M20 72V68.00A2.0 2.0 0 0 1 22.00 66H23.00A2.0 2.0 0 0 1 25 68.00V72Z" fill="#12c660"/><path d="M26 72V68.00A2.0 2.0 0 0 1 28.00 66H29.00A2.0 2.0 0 0 1 31 68.00V72Z" fill="#12c660"/><path d="M32 72V68.00A2.0 2.0 0 0 1 34.00 66H35.00A2.0 2.0 0 0 1 37 68.00V72Z" fill="#12c660"/><path d="M38 72V69.00A2.0 2.0 0 0 1 40.00 67H41.00A2.0 2.0 0 0 1 43 69.00V72Z" fill="#12c660"/><path d="M44 72V69.00A2.0 2.0 0 0 1 46.00 67H47.00A2.0 2.0 0 0 1 49 69.00V72Z" fill="#12c660"/><path d="M50 72V69.00A2.0 2.0 0 0 1 52.00 67H53.00A2.0 2.0 0 0 1 55 69.00V72Z" fill="#12c660"/><path d="M56 72V69.00A2.0 2.0 0 0 1 58.00 67H58.00A2.0 2.0 0 0 1 60 69.00V72Z" fill="#12c660"/><path d="M61 72V69.00A2.0 2.0 0 0 1 63.00 67H64.00A2.0 2.0 0 0 1 66 69.00V72Z" fill="#12c660"/><path d="M67 72V69.00A2.0 2.0 0 0 1 69.00 67H70.00A2.0 2.0 0 0 1 72 69.00V72Z" fill="#12c660"/><path d="M73 72V69.00A2.0 2.0 0 0 1 75.00 67H76.00A2.0 2.0 0 0 1 78 69.00V72Z" fill="#12c660"/><path d="M79 72V69.00A2.0 2.0 0 0 1 81.00 67H82.00A2.0 2.0 0 0 1 84 69.00V72Z" fill="#12c660"/><path d="M85 72V69.00A2.0 2.0 0 0 1 87.00 67H88.00A2.0 2.0 0 0 1 90 69.00V72Z" fill="#12c660"/><path d="M91 72V69.00A2.0 2.0 0 0 1 93.00 67H94.00A2.0 2.0 0 0 1 96 69.00V72Z" fill="#12c660"/><path d="M97 72V69.00A2.0 2.0 0 0 1 99.00 67H100.00A2.0 2.0 0 0 1 102 69.00V72Z" fill="#12c660"/><path d="M103 72V60.00A2.0 2.0 0 0 1 105.00 58H106.00A2.0 2.0 0 0 1 108 60.00V72Z" fill="#ff9a00"/><path d="M109 72V38.00A2.0 2.0 0 0 1 111.00 36H112.00A2.0 2.0 0 0 1 114 38.00V72Z" fill="#ff4538"/><path d="M115 72V30.00A2.0 2.0 0 0 1 117.00 28H117.00A2.0 2.0 0 0 1 119 30.00V72Z" fill="#ff4538"/><path d="M120 72V66.00A2.0 2.0 0 0 1 122.00 64H123.00A2.0 2.0 0 0 1 125 66.00V72Z" fill="#12c660"/><path d="M126 72V20.00A2.0 2.0 0 0 1 128.00 18H129.00A2.0 2.0 0 0 1 131 20.00V72Z" fill="#ff4538"/><path d="M132 72V18.00A2.0 2.0 0 0 1 134.00 16H135.00A2.0 2.0 0 0 1 137 18.00V72Z" fill="#ff4538"/><path d="M138 72V18.00A2.0 2.0 0 0 1 140.00 16H141.00A2.0 2.0 0 0 1 143 18.00V72Z" fill="#ff4538"/><path d="M144 72V7.00A2.0 2.0 0 0 1 146.00 5H147.00A2.0 2.0 0 0 1 149 7.00V72Z" fill="#ff4538"/><path d="M150 72V16.00A2.0 2.0 0 0 1 152.00 14H153.00A2.0 2.0 0 0 1 155 16.00V72Z" fill="#ff4538"/><path d="M156 72V16.00A2.0 2.0 0 0 1 158.00 14H159.00A2.0 2.0 0 0 1 161 16.00V72Z" fill="#ff4538"/><path d="M162 72V37.00A2.0 2.0 0 0 1 164.00 35H165.00A2.0 2.0 0 0 1 167 37.00V72Z" fill="#ff4538"/><path d="M168 72V62.00A2.0 2.0 0 0 1 170.00 60H170.00A2.0 2.0 0 0 1 172 62.00V72Z" fill="#ff9a00"/><path d="M173 72V61.00A2.0 2.0 0 0 1 175.00 59H176.00A2.0 2.0 0 0 1 178 61.00V72Z" fill="#ff9a00"/><path d="M179 72V67.00A2.0 2.0 0 0 1 181.00 65H182.00A2.0 2.0 0 0 1 184 67.00V72Z" fill="#12c660"/><path d="M185 72V67.00A2.0 2.0 0 0 1 187.00 65H188.00A2.0 2.0 0 0 1 190 67.00V72Z" fill="#12c660"/><path d="M191 72V68.00A2.0 2.0 0 0 1 193.00 66H194.00A2.0 2.0 0 0 1 196 68.00V72Z" fill="#12c660"/><path d="M197 72V68.00A2.0 2.0 0 0 1 199.00 66H200.00A2.0 2.0 0 0 1 202 68.00V72Z" fill="#12c660"/><path d="M203 72V67.00A2.0 2.0 0 0 1 205.00 65H206.00A2.0 2.0 0 0 1 208 67.00V72Z" fill="#12c660"/><path d="M209 72V67.00A2.0 2.0 0 0 1 211.00 65H212.00A2.0 2.0 0 0 1 214 67.00V72Z" fill="#12c660"/><path d="M215 72V67.00A2.0 2.0 0 0 1 217.00 65H218.00A2.0 2.0 0 0 1 220 67.00V72Z" fill="#12c660"/><path d="M221 72V67.00A2.0 2.0 0 0 1 223.00 65H224.00A2.0 2.0 0 0 1 226 67.00V72Z" fill="#12c660"/><path d="M227 72V66.00A2.0 2.0 0 0 1 229.00 64H229.00A2.0 2.0 0 0 1 231 66.00V72Z" fill="#12c660"/><path d="M232 72V65.00A2.0 2.0 0 0 1 234.00 63H235.00A2.0 2.0 0 0 1 237 65.00V72Z" fill="#12c660"/></svg></div><div class="card" style="left:9px;top:680px;width:496px;height:102px">
<div class="bt" style="letter-spacing:0.056px">LCP Resource Type</div><span class="lg2"><svg class="logo" width="15" height="15" viewBox="0 0 15 15"><path d="M12.7 2.5 V7.9 A5.55 5.55 0 0 1 1.6 7.9 V2.5" fill="none" stroke="#fbb400" stroke-width="3" stroke-linecap="round"/><path d="M1.6 2.5 V7.9 A5.55 5.55 0 0 0 4.55 12.8" fill="none" stroke="#1f9d45" stroke-width="3"/><path d="M1.6 2.5 V4" fill="none" stroke="#1f9d45" stroke-width="3" stroke-linecap="round"/><path d="M12.7 2.5 V5.4" fill="none" stroke="#e5322b" stroke-width="3" stroke-linecap="round"/><circle cx="6.9" cy="7.8" r="2.1" fill="#3b7be8"/></svg></span>
<div class="bbody" style="background:#f2e4e4"><span class="rt-l">Image</span><span class="rt-r">98%</span><div style="position:absolute;right:0;top:0;bottom:0;width:9px;background:#e4e3ee"></div></div></div><div class="card" style="left:520px;top:680px;width:496px;height:102px">
<div class="bt" style="letter-spacing:0.155px">LCP Subparts</div><span class="lg2"><svg class="logo" width="15" height="15" viewBox="0 0 15 15"><path d="M12.7 2.5 V7.9 A5.55 5.55 0 0 1 1.6 7.9 V2.5" fill="none" stroke="#fbb400" stroke-width="3" stroke-linecap="round"/><path d="M1.6 2.5 V7.9 A5.55 5.55 0 0 0 4.55 12.8" fill="none" stroke="#1f9d45" stroke-width="3"/><path d="M1.6 2.5 V4" fill="none" stroke="#1f9d45" stroke-width="3" stroke-linecap="round"/><path d="M12.7 2.5 V5.4" fill="none" stroke="#e5322b" stroke-width="3" stroke-linecap="round"/><circle cx="6.9" cy="7.8" r="2.1" fill="#3b7be8"/></svg></span>
<div class="bbody">
<div class="seg" style="left:0;width:292px;background:#dde0e4"><span style="position:absolute;left:16px;color:#1a1a1a;-webkit-text-stroke:0.6px #1a1a1a;letter-spacing:0px">TTFB</span><span style="position:absolute;right:8px;color:#1a1a1a">1.18 s</span></div>
<div class="seg" style="left:292px;width:97px;background:#e3ede7"><span style="position:absolute;left:8px;color:#30503c">388 ms</span></div>
<div class="seg" style="left:389px;width:45px;background:#dde9f2"></div>
<div class="seg" style="left:434px;width:62px;background:#ebdff6"><span style="position:absolute;right:10px;color:#5b2e8e">241 ms</span></div>
</div></div></body></html>
